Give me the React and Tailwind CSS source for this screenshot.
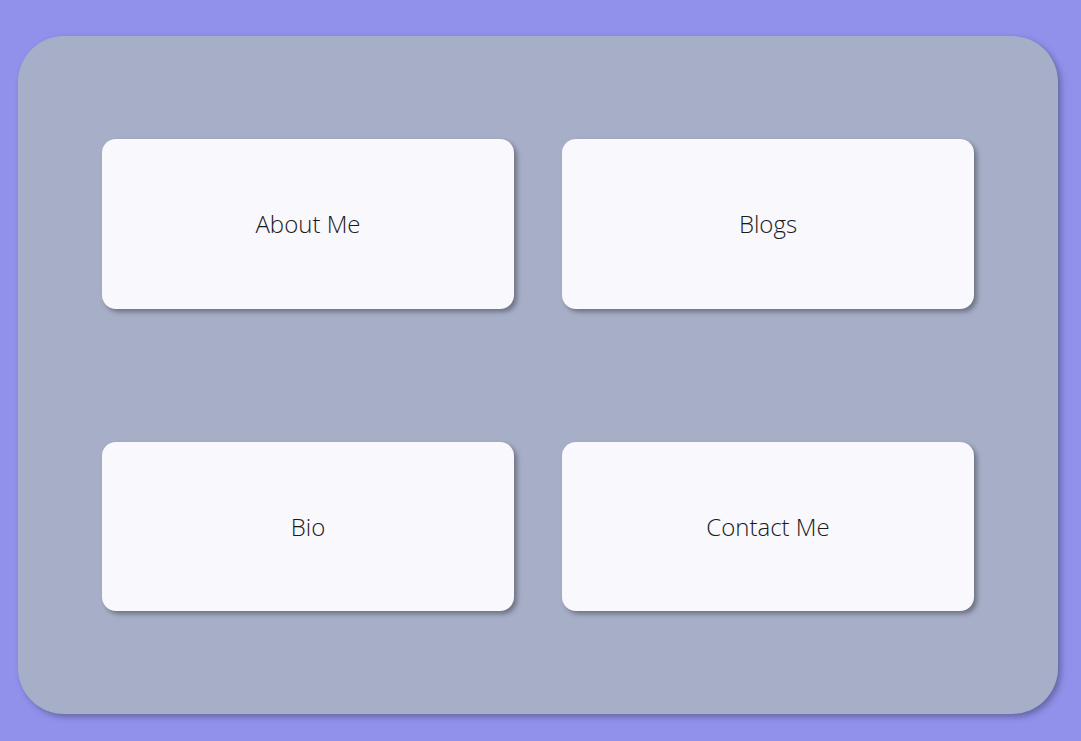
export default function App() {
  const items = ['About Me', 'Blogs', 'Bio', 'Contact Me'];
  return (
    <div className="min-h-screen w-full bg-[#9191ec] pt-[36px] pl-[18px]" style={{ minHeight: '741px' }}>
      <div className="grid h-[678px] w-[1040px] grid-cols-2 grid-rows-[170px_169px] gap-x-[48px] gap-y-[133px] rounded-[46px] bg-[#a7afc8] px-[84px] pt-[103px] shadow-[3px_3px_6px_rgba(0,0,0,0.3)]">
        {items.map(item => (
          <div
            key={item}
            className="flex items-center justify-center rounded-[14px] bg-[#f8f8fd] shadow-[3px_3px_5px_rgba(0,0,0,0.35)]"
          >
            <span className="font-['Open_Sans',sans-serif] text-[24px] font-light text-[#1a1a1a]">
              {item}
            </span>
          </div>
        ))}
      </div>
    </div>
  );
}
